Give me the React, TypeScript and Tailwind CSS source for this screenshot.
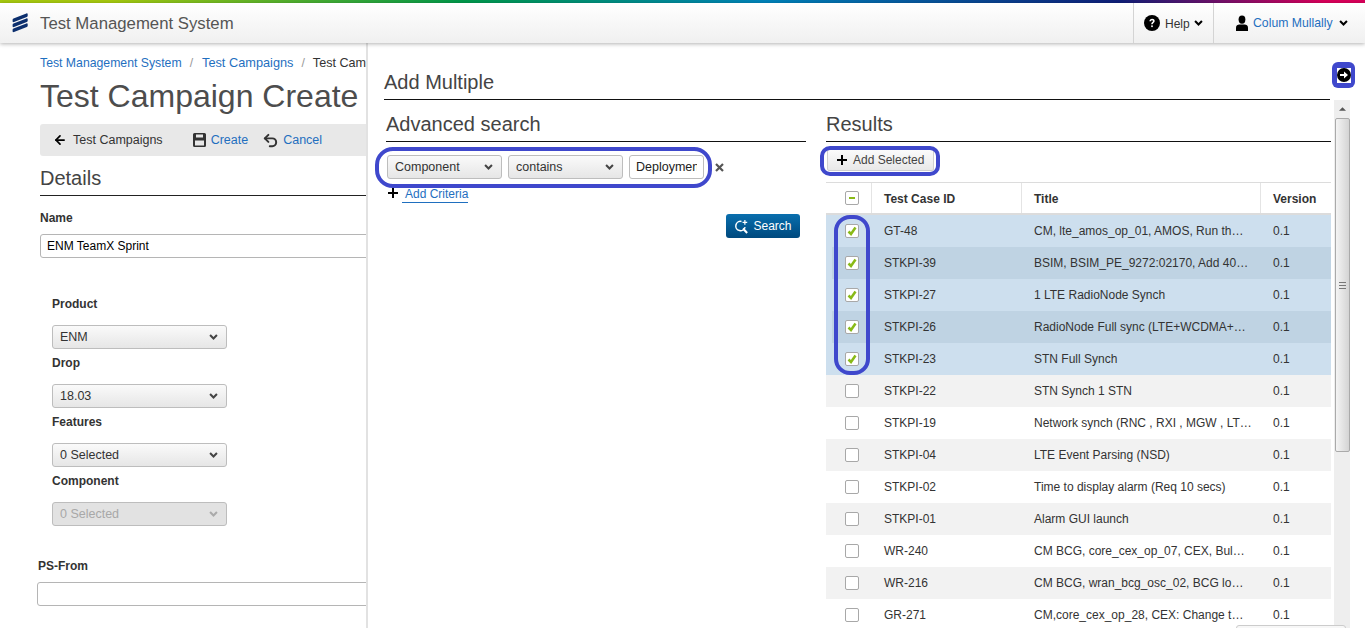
import { ArrowLeft, Undo2 } from "lucide-react";

const rows = [
  { id: "GT-48", title: "CM, lte_amos_op_01, AMOS, Run th…", checked: true },
  { id: "STKPI-39", title: "BSIM, BSIM_PE_9272:02170, Add 40…", checked: true },
  { id: "STKPI-27", title: "1 LTE RadioNode Synch", checked: true },
  { id: "STKPI-26", title: "RadioNode Full sync (LTE+WCDMA+…", checked: true },
  { id: "STKPI-23", title: "STN Full Synch", checked: true },
  { id: "STKPI-22", title: "STN Synch 1 STN", checked: false },
  { id: "STKPI-19", title: "Network synch (RNC , RXI , MGW , LT…", checked: false },
  { id: "STKPI-04", title: "LTE Event Parsing (NSD)", checked: false },
  { id: "STKPI-02", title: "Time to display alarm (Req 10 secs)", checked: false },
  { id: "STKPI-01", title: "Alarm GUI launch", checked: false },
  { id: "WR-240", title: "CM BCG, core_cex_op_07, CEX, Bul…", checked: false },
  { id: "WR-216", title: "CM BCG, wran_bcg_osc_02, BCG lo…", checked: false },
  { id: "GR-271", title: "CM,core_cex_op_28, CEX: Change t…", checked: false },
];

const Chevron = ({ className = "" }: { className?: string }) => (
  <svg viewBox="0 0 10 7" className={`w-[9px] h-[6px] ${className}`} fill="none" stroke="currentColor" strokeWidth="2.4">
    <path d="M1 1.2 5 5.2 9 1.2" />
  </svg>
);

const PlusMark = ({ className = "" }: { className?: string }) => (
  <svg viewBox="0 0 10 10" className={`w-[10px] h-[10px] ${className}`} fill="#000">
    <path d="M4 0h2v4h4v2H6v4H4V6H0V4h4z" />
  </svg>
);

const SelectBox = ({ label, className = "", disabled = false }: { label: string; className?: string; disabled?: boolean }) => (
  <div
    className={`h-6 flex items-center justify-between pl-[7px] pr-[8px] rounded-[3px] border border-[#bdbdbd] text-[12.5px] ${
      disabled ? "bg-[#e2e2e2] text-[#a8a8a8]" : "bg-gradient-to-b from-[#fafafa] to-[#e6e6e6] text-[#333]"
    } ${className}`}
  >
    <span>{label}</span>
    <Chevron className={disabled ? "text-[#aaa]" : "text-[#444]"} />
  </div>
);

const SideField = ({ label, value, disabled }: { label: string; value: string; disabled?: boolean }) => (
  <div className="w-[175px] h-[59px]">
    <div className="h-[29px] pt-px text-xs font-bold text-[#333] leading-[14px]">{label}</div>
    <SelectBox label={value} disabled={disabled} />
  </div>
);

const CheckBox = ({ checked }: { checked: boolean }) => (
  <span className="w-[14px] h-[14px] flex items-center justify-center rounded-[2px] border border-[#a8a8a8] bg-white">
    {checked && (
      <svg viewBox="0 0 10 10" className="w-[10px] h-[10px]" fill="none" stroke="#89ba17" strokeWidth="2.5">
        <path d="M1.5 5.5 4 8 8.5 1.5" />
      </svg>
    )}
  </span>
);

const rowColor = (i: number, checked: boolean) => {
  if (checked) return i % 2 === 0 ? "bg-[#cddfee]" : "bg-[#bfd3e3] shadow-[inset_6px_0_0_#cddfee]";
  return i % 2 === 0 ? "bg-white" : "bg-[#f2f2f2]";
};

const Outline = ({ className }: { className: string }) => (
  <div className={`absolute border-4 border-[#3f48cc] pointer-events-none ${className}`} />
);

export default function App() {
  return (
    <div className="relative w-[1365px] h-[628px] overflow-hidden bg-white font-['Liberation_Sans',Arial,sans-serif] text-[#333] flex flex-col">
      <div className="h-[3px] bg-[linear-gradient(90deg,#a5c80f_0%,#a5c80f_8%,#00974a_34%,#0082b9_56%,#0f1f78_82%,#d8005a_97%,#d8005a_100%)]" />
      <header className="relative z-20 h-[40px] flex items-center bg-gradient-to-b from-white to-[#f0f0f0] shadow-[0_1px_4px_rgba(0,0,0,0.3)]">
        <svg viewBox="0 0 16 20" className="ml-[12px] w-[16px] h-[20px] text-[#0c2f6e]" fill="currentColor">
          <path d="M1.5 5.6 14.4 0.4c0.8-.3 1.3.1 1.3.8v1.6c0 .6-.3 1-.9 1.2L2 9.1c-.8.3-1.4 0-1.4-.8V6.8c0-.6.3-1 .9-1.2z" />
          <path d="M1.5 10.6 14.4 5.4c0.8-.3 1.3.1 1.3.8v1.6c0 .6-.3 1-.9 1.2L2 14.1c-.8.3-1.4 0-1.4-.8v-1.5c0-.6.3-1 .9-1.2z" />
          <path d="M1.5 15.6 14.4 10.4c0.8-.3 1.3.1 1.3.8v1.6c0 .6-.3 1-.9 1.2L2 19.1c-.8.3-1.4 0-1.4-.8v-1.5c0-.6.3-1 .9-1.2z" />
        </svg>
        <div className="ml-[12px] pt-px text-[16.75px] text-[#555]">Test Management System</div>
        <div className="ml-auto h-full flex">
          <div className="w-[80px] border-l border-[#d4d4d4] flex items-center pl-[10px] text-xs text-[#333]">
            <svg viewBox="0 0 16 16" className="w-4 h-4 mr-[5px]">
              <circle cx="8" cy="8" r="8" fill="#000" />
              <path d="M5.4 6.2c0-1.6 1.2-2.5 2.7-2.5s2.6.9 2.6 2.2c0 1.9-2 1.8-2 3.4H7.2c0-2.3 1.8-2.2 1.8-3.3 0-.5-.4-.8-.9-.8-.6 0-1 .4-1 1z" fill="#fff" />
              <rect x="7.2" y="10.4" width="1.6" height="1.7" fill="#fff" />
            </svg>
            <span className="pt-px">Help</span>
            <Chevron className="ml-[4px] text-black" />
          </div>
          <div className="w-[152px] border-l border-[#d4d4d4] flex items-center pl-[22px] text-[12.25px] text-[#1f6fbf]">
            <svg viewBox="0 0 12 16" className="w-3 h-4 mr-[5px]" fill="#000">
              <ellipse cx="6" cy="4.6" rx="3.4" ry="4.2" />
              <path d="M0 16v-3.6c0-2 1.6-3 3.4-3h5.2c1.8 0 3.4 1 3.4 3V16z" />
            </svg>
            <span className="pt-px">Colum Mullally</span>
            <Chevron className="ml-[6px] text-black" />
          </div>
        </div>
      </header>

      <div className="flex-1 flex min-h-0">
        <section className="w-[366px] shrink-0 overflow-hidden relative">
          <div className="ml-[40px] mt-[12px] w-[400px] h-[15px] flex items-baseline text-[12.25px] leading-[15px] whitespace-nowrap">
            <span className="text-[#1f6fbf]">Test Management System</span>
            <span className="ml-[8px] mr-[9px] text-[#999]">/</span>
            <span className="text-[#1f6fbf] text-[12.75px]">Test Campaigns</span>
            <span className="mx-[8px] text-[#999]">/</span>
            <span className="text-[12.6px]">Test Campaign Create</span>
          </div>
          <h1 className="ml-[40px] mt-[7px] text-[32px] leading-[38px] text-[#4d4d4d] whitespace-nowrap">Test Campaign Create</h1>
          <div className="ml-[40px] mt-[9px] w-[340px] h-[32px] bg-[#e8e8e8] rounded-[3px] flex items-center text-[12.5px]">
            <ArrowLeft className="ml-[13px] w-[14px] h-[14px] text-black" strokeWidth={3} />
            <span className="ml-[6px] text-[#333]">Test Campaigns</span>
            <svg viewBox="0 0 13 14" className="ml-[30px] w-[13px] h-[14px]" fill="#333">
              <path fillRule="evenodd" d="M1.5 0h10A1.5 1.5 0 0 1 13 1.5v11a1.5 1.5 0 0 1-1.5 1.5h-10A1.5 1.5 0 0 1 0 12.5v-11A1.5 1.5 0 0 1 1.5 0zM3 1.6v3h7v-3zM2 7.4v5h9v-5z" />
            </svg>
            <span className="ml-[5px] text-[#1f6fbf]">Create</span>
            <Undo2 className="ml-[14px] w-[17px] h-[17px] text-[#333]" strokeWidth={2.8} />
            <span className="ml-[4px] text-[#1f6fbf]">Cancel</span>
          </div>
          <div className="ml-[40px] mt-[10px] w-[330px] h-[30px] border-b border-[#222] text-xl leading-[24px] text-[#444]">Details</div>
          <div className="ml-[40px] mt-[15px] text-xs font-bold leading-[14px]">Name</div>
          <div className="ml-[40px] mt-[9px] w-[340px] h-6 border border-[#b5b5b5] rounded-[3px] px-[6px] text-xs leading-[22px] text-black">ENM TeamX Sprint</div>
          <div className="ml-[52px] mt-[38px]">
            <SideField label="Product" value="ENM" />
            <SideField label="Drop" value="18.03" />
            <SideField label="Features" value="0 Selected" />
            <SideField label="Component" value="0 Selected" disabled />
          </div>
          <div className="ml-[38px] mt-[27px] text-xs font-bold leading-[14px]">PS-From</div>
          <div className="ml-[37px] mt-[9px] w-[340px] h-6 border border-[#b5b5b5] rounded-[3px]" />
        </section>

        <section className="flex-1 border-l-2 border-[#e2e2e2] pl-[16px] min-w-0">
          <div className="mt-[26px] w-[946px] h-[31px] border-b border-[#111] text-xl leading-[26px] text-[#444]">Add Multiple</div>
          <div className="flex">
            <div className="ml-[2px] mt-[8px] w-[420px] shrink-0">
              <div className="h-[34px] border-b border-[#111] text-xl leading-[32px] text-[#444]">Advanced search</div>
              <div className="mt-[13px] ml-[1px] flex items-center h-6">
                <SelectBox label="Component" className="w-[115px]" />
                <SelectBox label="contains" className="w-[115px] ml-[6px]" />
                <div className="ml-[6px] w-[75px] h-6 border border-[#bdbdbd] rounded-[3px] px-[6px] text-[12.5px] leading-[22px] text-[#222]">
                  <div className="overflow-hidden whitespace-nowrap">Deployment</div>
                </div>
                <svg viewBox="0 0 9 9" className="ml-[11px] w-[9px] h-[9px]" stroke="#555" strokeWidth="2.2">
                  <path d="M1 1 8 8M8 1 1 8" />
                </svg>
              </div>
              <div className="mt-[8px] ml-[2px] flex items-start h-[18px] text-xs">
                <PlusMark className="mt-px" />
                <span className="ml-[4px] pl-[3px] h-[16px] text-[#1f6fbf] border-b border-[#1f6fbf] leading-[14px]">Add Criteria</span>
              </div>
              <div className="flex justify-end mt-[9px] pr-[6px]">
                <div className="w-[74px] h-6 rounded-[3px] bg-gradient-to-b from-[#0a6fae] to-[#00497e] text-white text-xs flex items-center justify-center">
                  <svg viewBox="0 0 16 16" className="w-[15px] h-[15px] mr-[4px]" fill="none" stroke="#fff" strokeWidth="1.6">
                    <path d="M8 2.6a5 5 0 1 0 3.8 6" />
                    <path d="M9.6 10.2 14 15" strokeWidth="2.2" />
                    <path d="M11.6 1v5M9.1 3.5h5" strokeWidth="1.3" />
                  </svg>
                  Search
                </div>
              </div>
            </div>

            <div className="ml-[20px] mt-[8px] w-[505px] shrink-0 min-w-0">
              <div className="h-[34px] border-b border-[#111] text-xl leading-[32px] text-[#444]">Results</div>
              <div className="mt-[7px] ml-[1px] h-[22px] w-[107px] rounded-[2px] border border-[#cfcfcf] bg-gradient-to-b from-[#fbfbfb] to-[#e8e8e8] flex items-center text-xs text-[#444]">
                <PlusMark className="ml-[9px]" />
                <span className="ml-[6px]">Add Selected</span>
              </div>
              <div className="mt-[11px] h-[33px] border-t border-b-2 border-[#dcdcdc] flex text-xs font-bold items-stretch">
                <div className="w-[46px] border-r border-[#e4e4e4] flex items-center pl-[19px]">
                  <span className="w-[14px] h-[14px] flex items-center justify-center rounded-[2px] border border-[#a8a8a8]">
                    <span className="w-[6px] h-[2px] bg-[#89ba17]" />
                  </span>
                </div>
                <div className="w-[150px] border-r border-[#e4e4e4] pl-[12px] pt-px flex items-center">Test Case ID</div>
                <div className="w-[239px] border-r border-[#e4e4e4] pl-[12px] pt-px flex items-center">Title</div>
                <div className="pl-[12px] pt-px flex items-center">Version</div>
              </div>
              {rows.map((row, i) => (
                <div key={row.id} className={`h-8 flex items-center text-xs ${rowColor(i, row.checked)}`}>
                  <div className="w-[46px] flex pl-[19px]">
                    <CheckBox checked={row.checked} />
                  </div>
                  <div className="w-[150px] pl-[12px]">{row.id}</div>
                  <div className="w-[239px] pl-[12px] whitespace-nowrap overflow-hidden">{row.title}</div>
                  <div className="pl-[12px]">0.1</div>
                </div>
              ))}
            </div>

            <div className="ml-[3px] w-[16px] h-[528px] bg-[#eeeeee] shrink-0 flex flex-col items-center">
              <svg viewBox="0 0 8 4" className="mt-[7px] w-[7px] h-[4px]" fill="#555">
                <path d="M0 4 4 0 8 4z" />
              </svg>
              <div className="mt-[7px] w-[15px] h-[334px] border border-[#aaa] rounded-[2px] bg-gradient-to-r from-[#f4f4f4] to-[#d4d4d4] flex items-center justify-center">
                <div className="w-[7px] h-[7px] border-y border-[#777] flex items-center">
                  <div className="w-full h-px bg-[#777]" />
                </div>
              </div>
            </div>
          </div>
        </section>
      </div>

      <div className="absolute left-[1332px] top-[62px] w-[23px] h-[26px] rounded-[6px] bg-[#3f48cc] flex items-center justify-center">
        <div className="w-[14px] h-[15px] bg-white flex items-center justify-center">
          <svg viewBox="0 0 14 14" className="w-[14px] h-[14px]">
            <circle cx="7" cy="7" r="7" fill="#000" />
            <path d="M3 6h4V3.4L11 7l-4 3.6V8H3z" fill="#fff" />
          </svg>
        </div>
      </div>
      <Outline className="left-[375px] top-[147px] w-[337px] h-[41px] rounded-[18px]" />
      <Outline className="left-[820px] top-[146px] w-[120px] h-[30px] rounded-[10px]" />
      <Outline className="left-[834px] top-[215px] w-[36px] h-[160px] rounded-[16px]" />
      <div className="absolute left-[1236px] top-[625px] w-[110px] h-[6px] rounded-t-[3px] border border-[#ccc] bg-[#f7f7f7]" />
    </div>
  );
}
